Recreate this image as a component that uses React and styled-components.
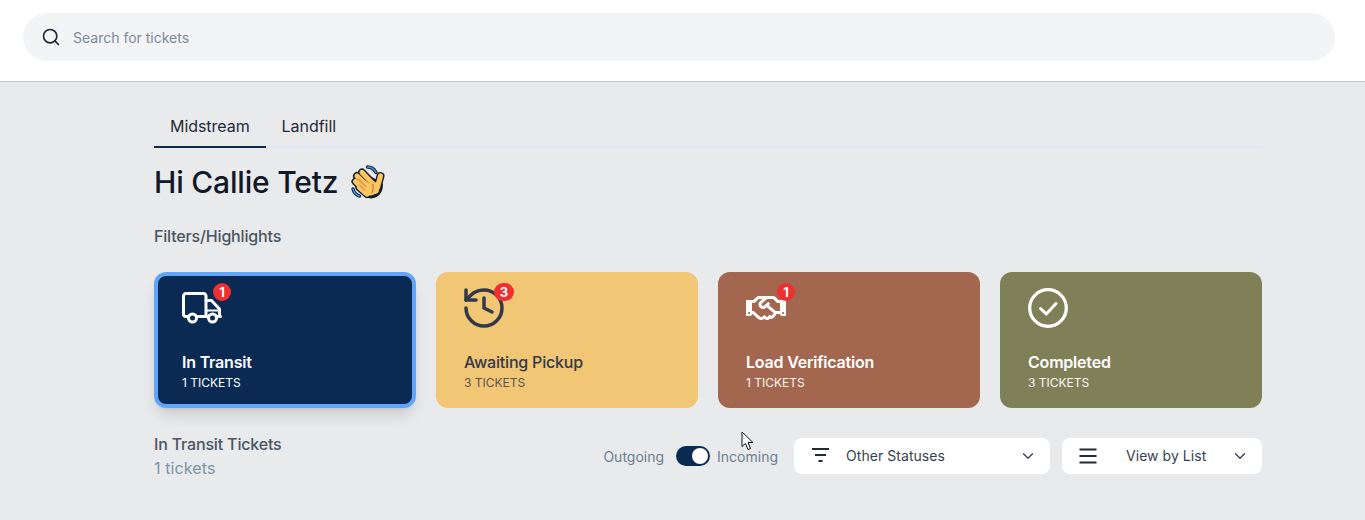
import React from "react";
import styled, { createGlobalStyle } from "styled-components";
import { Search, History, ChevronDown } from "lucide-react";
import { FaRegHandshake } from "react-icons/fa";

const Global = createGlobalStyle`
  html, body { margin: 0; padding: 0; background: #e9eaec; }
  body { font-family: Inter, "Noto Sans", sans-serif; }
  * { box-sizing: border-box; }
`;

const Page = styled.div`
  position: relative;
  height: 520px;
  overflow: hidden;
  background: #e9eaec;
`;
const Header = styled.header`
  height: 82px;
  background: #fff;
  border-bottom: 1px solid #c6c8cb;
  padding: 13px 30px 0 23px;
`;
const SearchBar = styled.div`
  height: 48px;
  border-radius: 24px;
  background: #f3f4f6;
  display: flex;
  align-items: center;
  gap: 12px;
  padding: 0 18px;
  color: #1f2937;
`;
const Placeholder = styled.span`
  font-size: 14px;
  color: #7c8a9b;
`;
const Main = styled.main`
  width: 1108px;
  margin-left: 154px;
  padding-top: 24px;
`;
const Tabs = styled.nav`
  display: flex;
  height: 42px;
  border-bottom: 2px solid #e2e8f0;
`;
const Tab = styled.div`
  height: 42px;
  padding: 0 16px;
  display: flex;
  align-items: center;
  font-size: 16px;
  letter-spacing: -0.05px;
  color: #1f2a3c;
  border-bottom: 2px solid ${(p) => (p.$active ? "#0a2a54" : "transparent")};
`;
const Heading = styled.h1`
  margin: 16px 0 0;
  display: flex;
  align-items: center;
  gap: 12px;
  height: 36px;
  font-size: 30px;
  line-height: 36px;
  font-weight: 500;
  letter-spacing: -0.2px;
  color: #111827;
`;
const SectionLabel = styled.div`
  margin-top: 24px;
  font-size: 16px;
  line-height: 24px;
  font-weight: 500;
  letter-spacing: -0.17px;
  color: #4b5563;
`;
const Cards = styled.section`
  margin-top: 24px;
  display: grid;
  grid-template-columns: repeat(4, 262px);
  gap: 20px;
`;
const Card = styled.div`
  height: 136px;
  border-radius: 12px;
  border: 4px solid ${(p) => (p.$selected ? "#60a5fa" : "transparent")};
  background: ${(p) => p.$bg};
  color: ${(p) => p.$fg};
  padding: 12px 24px 0;
  box-shadow: ${(p) => (p.$selected ? "0 10px 15px -3px rgba(0,0,0,.12), 0 4px 6px -4px rgba(0,0,0,.1)" : "none")};
`;
const IconWrap = styled.div`
  position: relative;
  width: 40px;
  height: 40px;
  display: flex;
  align-items: center;
  justify-content: center;

  > svg {
    flex-shrink: 0;
  }
`;
const Badge = styled.span`
  position: absolute;
  top: -5px;
  right: ${(p) => (p.$wide ? "-10px" : "-9px")};
  min-width: ${(p) => (p.$wide ? "20px" : "18px")};
  height: 18px;
  border-radius: 9px;
  background: #ef3030;
  color: #fff;
  font-size: 13px;
  font-weight: 700;
  display: flex;
  align-items: center;
  justify-content: center;
`;
const CardTitle = styled.div`
  margin-top: 22px;
  font-size: 16px;
  line-height: 24px;
  letter-spacing: -0.2px;
  font-weight: ${(p) => p.$weight};
`;
const CardSub = styled.div`
  margin-top: 1px;
  font-size: 12px;
  line-height: 16px;
  opacity: ${(p) => p.$dim};
`;
const Bottom = styled.section`
  margin-top: 24px;
  display: flex;
  align-items: center;
  justify-content: space-between;
`;
const Summary = styled.div`
  font-size: 16px;
  line-height: 24px;
`;
const SummaryTitle = styled.div`
  font-weight: 500;
  letter-spacing: -0.17px;
  color: #4b5563;
`;
const SummaryCount = styled.div`
  letter-spacing: 0.1px;
  color: #7c93a8;
`;
const Controls = styled.div`
  display: flex;
  align-items: center;
`;
const ToggleGroup = styled.div`
  display: flex;
  align-items: center;
  gap: 8px;
  margin-right: 16px;
  font-size: 14px;
  color: #6b7f92;
`;
const ToggleLabel = styled.span`
  margin-right: ${(p) => p.$mr || 0}px;
`;
const Toggle = styled.div`
  width: 34px;
  height: 20px;
  border-radius: 10px;
  background: #0a2a54;
  display: flex;
  align-items: center;
  justify-content: flex-end;
  padding-right: 2px;
  margin-right: -1px;
`;
const Knob = styled.div`
  width: 16px;
  height: 16px;
  border-radius: 50%;
  background: #fff;
`;
const Select = styled.div`
  width: ${(p) => p.$w}px;
  margin-left: ${(p) => p.$ml || 0}px;
  height: 36px;
  border-radius: 8px;
  background: #fff;
  display: flex;
  align-items: center;
  padding: 0 13px 0 16px;
  font-size: 14px;
  color: #374151;
  letter-spacing: 0.05px;
`;
const SelectText = styled.span`
  flex: 1;
  margin-left: ${(p) => p.$ml}px;
  padding-bottom: 1px;
`;
const Cursor = styled.svg`
  position: absolute;
  left: 741px;
  top: 431px;
`;

const TruckIcon = () => (
  <svg width="40" height="40" viewBox="0 0 40 40" fill="none" stroke="#fff" strokeWidth="3" strokeLinejoin="round" strokeLinecap="round">
    <path d="M6 28.5H3.5A2.5 2.5 0 0 1 1.5 26V8A2.5 2.5 0 0 1 4 5.5h17A2.5 2.5 0 0 1 24 8v20.5H15" />
    <path d="M24 12.5h5.5L37.5 21v7.5h-2" />
    <path d="M25 28.5h-1" />
    <path d="M38.5 28.5h-1" />
    <circle cx="10.5" cy="30" r="4" />
    <circle cx="30.5" cy="30" r="4" />
    <path d="M25 22.5h11" strokeWidth="2" />
  </svg>
);

const CheckIcon = () => (
  <svg width="40" height="40" viewBox="0 0 40 40" fill="none" stroke="#fff" strokeLinecap="round" strokeLinejoin="round">
    <circle cx="20" cy="20" r="18.3" strokeWidth="3.3" />
    <path d="M12.5 20.5L18.3 26L28 15.5" strokeWidth="3" />
  </svg>
);

const WaveHand = () => {
  const shape = (
    <>
      <path d="M17 21 L29 33" />
      <path d="M22 17.5 L33 29" />
      <path d="M15.5 26.5 L25 36" />
      <path d="M19.5 32.5 L27 39" />
      <path d="M40.5 21 L37.5 32" />
      <path d="M28 26 L36 36" />
      <path d="M31 31 L28.5 38" />
    </>
  );
  return (
    <svg width="36" height="36" viewBox="10 9 36 36" fill="none" strokeLinecap="round" strokeLinejoin="round">
      <g stroke="#141c33" strokeWidth="8">{shape}</g>
      <path d="M19 34 Q24 42 31 42.5 Q42 41 42 29 L30 22Z" fill="#141c33" stroke="#141c33" strokeWidth="2" />
      <g stroke="#fbc75e" strokeWidth="5.2">{shape}</g>
      <path d="M21 33 Q26 40 31 40.5 Q40 39 40 30 L30 24Z" fill="#fbc75e" />
      <g stroke="#c2562f" strokeWidth="0.9">
        <path d="M18.5 24 L26 31.5" />
        <path d="M21 20.5 L28.5 28" />
        <path d="M19.5 30 L24.5 35" />
        <path d="M33 29 Q34 34 32 38" />
      </g>
      <g stroke="#141c33" strokeWidth="3.4">
        <path d="M27.5 12 Q33 12 36 17.5" />
        <path d="M13 34 Q14 39 19.5 41" />
      </g>
      <g stroke="#3f9be0" strokeWidth="1.4">
        <path d="M27.5 12 Q33 12 36 17.5" />
        <path d="M13 34 Q14 39 19.5 41" />
      </g>
    </svg>
  );
};

const FilterIcon = () => (
  <svg width="20" height="20" viewBox="0 0 20 20" fill="none" stroke="#1f2937" strokeWidth="2">
    <path d="M2 3h17M5 9h11M8.5 15h4" />
  </svg>
);

const ListIcon = () => (
  <svg width="20" height="20" viewBox="0 0 20 20" fill="none" stroke="#1f2937" strokeWidth="2">
    <path d="M1.5 3.5h17M1.5 10h17M1.5 16.5h17" />
  </svg>
);

const cards = [
  { title: "In Transit", sub: "1 TICKETS", bg: "#0a2a54", fg: "#fff", weight: 600, dim: 1, selected: true, badge: "1", icon: <TruckIcon /> },
  { title: "Awaiting Pickup", sub: "3 TICKETS", bg: "#f1c675", fg: "#33384a", weight: 500, dim: 0.8, badge: "3", wide: true, icon: <History size={48} strokeWidth={1.75} /> },
  { title: "Load Verification", sub: "1 TICKETS", bg: "#a3674f", fg: "#fff", weight: 600, dim: 0.95, badge: "1", icon: <FaRegHandshake size={40} /> },
  { title: "Completed", sub: "3 TICKETS", bg: "#7f8058", fg: "#fff", weight: 600, dim: 0.95, icon: <CheckIcon /> },
];

export default function App() {
  return (
    <Page>
      <Global />
      <Header>
        <SearchBar>
          <Search size={20} strokeWidth={2} />
          <Placeholder>Search for tickets</Placeholder>
        </SearchBar>
      </Header>
      <Main>
        <Tabs>
          <Tab $active>Midstream</Tab>
          <Tab>Landfill</Tab>
        </Tabs>
        <Heading>
          Hi Callie Tetz <WaveHand />
        </Heading>
        <SectionLabel>Filters/Highlights</SectionLabel>
        <Cards>
          {cards.map((c) => (
            <Card key={c.title} $bg={c.bg} $fg={c.fg} $selected={c.selected}>
              <IconWrap>
                {c.icon}
                {c.badge && <Badge $wide={c.wide}>{c.badge}</Badge>}
              </IconWrap>
              <CardTitle $weight={c.weight}>{c.title}</CardTitle>
              <CardSub $dim={c.dim}>{c.sub}</CardSub>
            </Card>
          ))}
        </Cards>
        <Bottom>
          <Summary>
            <SummaryTitle>In Transit Tickets</SummaryTitle>
            <SummaryCount>1 tickets</SummaryCount>
          </Summary>
          <Controls>
            <ToggleGroup>
              <ToggleLabel $mr={4}>Outgoing</ToggleLabel>
              <Toggle>
                <Knob />
              </Toggle>
              <ToggleLabel>Incoming</ToggleLabel>
            </ToggleGroup>
            <Select $w={256}>
              <FilterIcon />
              <SelectText $ml={16}>Other Statuses</SelectText>
              <ChevronDown size={18} strokeWidth={1.75} />
            </Select>
            <Select $w={200} $ml={12}>
              <ListIcon />
              <SelectText $ml={28}>View by List</SelectText>
              <ChevronDown size={18} strokeWidth={1.75} />
            </Select>
          </Controls>
        </Bottom>
      </Main>
      <Cursor width="14" height="21" viewBox="0 0 14 21">
        <path d="M1 1 L1 15.5 L4.5 12.5 L7 18.5 L9.5 17.5 L7 11.5 L12 11.5 Z" fill="#fff" stroke="#111" strokeWidth="1" strokeLinejoin="round" />
      </Cursor>
    </Page>
  );
}
